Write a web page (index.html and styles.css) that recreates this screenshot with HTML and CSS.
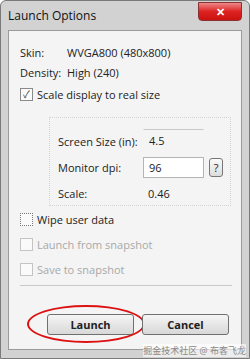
FILE: index.html
```html
<!DOCTYPE html>
<html lang="en">
<head>
  <meta charset="UTF-8">
  <title>Launch Options</title>
  <link rel="stylesheet" href="styles.css">
</head>
<body>
  <div class="window">
    <div class="titlebar">
      <span class="title">Launch Options</span>
      <div class="close-btn">&#10005;</div>
    </div>

    <div class="client">
      <div class="info-row"><span class="label">Skin:</span><span>WVGA800 (480x800)</span></div>
      <div class="info-row"><span class="label">Density:</span><span>High (240)</span></div>

      <label class="check-row">
        <span class="box checked">&#10003;</span>
        <span>Scale display to real size</span>
      </label>

      <div class="scale-group">
        <div class="field-row">
          <span class="field-label">Screen Size (in):</span>
          <span class="field flat">4.5</span>
        </div>
        <div class="field-row">
          <span class="field-label">Monitor dpi:</span>
          <span class="field">96</span>
          <span class="help-btn">?</span>
        </div>
        <div class="field-row">
          <span class="field-label">Scale:</span>
          <span class="value">0.46</span>
        </div>
      </div>

      <label class="check-row">
        <span class="box dotted"></span>
        <span>Wipe user data</span>
      </label>
      <label class="check-row disabled">
        <span class="box"></span>
        <span>Launch from snapshot</span>
      </label>
      <label class="check-row disabled">
        <span class="box"></span>
        <span>Save to snapshot</span>
      </label>

      <div class="separator"></div>

      <div class="buttons">
        <div class="btn launch">Launch</div>
        <div class="btn">Cancel</div>
      </div>
    </div>
    <div class="watermark">掘金技术社区 @ 布客飞龙</div>
  </div>
</body>
</html>
```

FILE: styles.css
```css
body {
  margin: 0;
  background: #fff;
  font-family: "Open Sans", "Noto Sans CJK SC", sans-serif;
  font-size: 11px;
  color: #222;
}

.window {
  position: relative;
  width: 250px;
  height: 359px;
  box-sizing: border-box;
  background: #d2d2d2;
  border: 1px solid #7a7a7a;
  border-radius: 6px 6px 0 0;
  padding: 0 7px 8px 7px;
  display: flex;
  flex-direction: column;
}

.titlebar {
  height: 29px;
  display: flex;
  align-items: flex-start;
  justify-content: space-between;
}

.title {
  font-size: 12px;
  margin-top: 6px;
  color: #111;
}

.close-btn {
  width: 42px;
  height: 17px;
  margin-top: 1px;
  background: linear-gradient(#e88, #d22 50%, #c11);
  border: 1px solid #833;
  border-radius: 0 0 4px 4px;
  color: #fff;
  font-size: 11px;
  font-weight: bold;
  text-align: center;
  line-height: 17px;
}

.client {
  flex: 1;
  background: #f4f4f4;
  border: 1px solid #9a9a9a;
  padding: 11px 10px 0 11px;
  display: flex;
  flex-direction: column;
}

.info-row {
  height: 20px;
  display: flex;
  align-items: center;
}

.info-row .label {
  width: 47px;
}

.check-row {
  height: 25px;
  display: flex;
  align-items: center;
  gap: 4px;
}

.box {
  width: 11px;
  height: 11px;
  border: 1px solid #8a8a8a;
  background: #fafafa;
  font-size: 10px;
  line-height: 11px;
  text-align: center;
  color: #333;
}

.box.dotted {
  border: 1px dotted #777;
}

.check-row.disabled {
  color: #a8a8a8;
}

.check-row.disabled .box {
  border-color: #c4c4c4;
}

.scale-group {
  margin: 10px 0 1px 29px;
  border: 1px dotted #d4d4d4;
  padding: 13px 0 1px 8px;
  display: flex;
  flex-direction: column;
  gap: 5px;
}

.field-row {
  height: 21px;
  display: flex;
  align-items: center;
}

.field-label {
  width: 85px;
}

.field {
  width: 54px;
  height: 19px;
  line-height: 19px;
  padding-left: 5px;
  border: 1px solid #b4b4b4;
  background: #fff;
}

.field.flat {
  height: 22px;
  line-height: 22px;
  margin-top: -2px;
  border-color: transparent;
  border-top-color: #c8c8c8;
  background: transparent;
}

.value {
  padding-left: 5px;
}

.help-btn {
  width: 12px;
  height: 17px;
  margin-left: 5px;
  border: 1px solid #777;
  border-radius: 3px;
  background: linear-gradient(#fafafa, #dcdcdc);
  text-align: center;
  line-height: 17px;
}

.separator {
  margin-top: 3px;
  border-top: 1px solid #c8c8c8;
  width: 212px;
}

.buttons {
  margin-top: 28px;
  display: flex;
  justify-content: flex-end;
  gap: 8px;
  padding-right: 2px;
}

.btn {
  position: relative;
  width: 85px;
  height: 19px;
  line-height: 19px;
  text-align: center;
  border: 1px solid #707070;
  border-radius: 3px;
  background: linear-gradient(#f6f6f6, #e6e6e6 50%, #d8d8d8);
  font-weight: bold;
  color: #222;
}

.btn.launch::after {
  content: "";
  position: absolute;
  left: -21px;
  top: -10px;
  width: 114px;
  height: 34px;
  border: 2px solid #d11;
  border-radius: 50%;
}

.watermark {
  position: absolute;
  right: 3px;
  bottom: 1px;
  font-size: 9px;
  color: #8a8a8a;
  background: rgba(255, 255, 255, 0.6);
}
```
